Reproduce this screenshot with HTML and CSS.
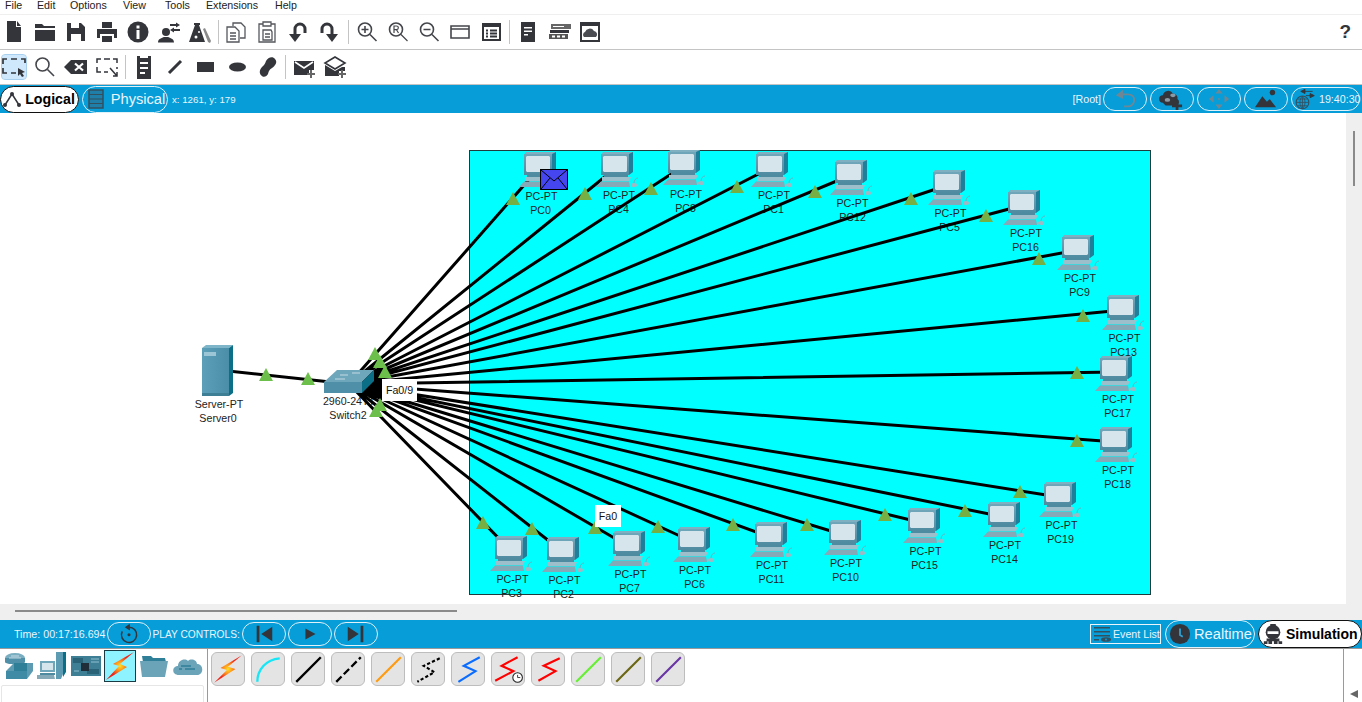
FILE: index.html
```html
<!DOCTYPE html>
<html lang="en">
<head>
<meta charset="utf-8">
<title>Cisco Packet Tracer</title>
<link rel="stylesheet" href="styles.css">
</head>
<body>
<div class="app">
  <nav class="menu">
    <span>File</span><span>Edit</span><span>Options</span><span>View</span><span>Tools</span><span>Extensions</span><span>Help</span>
  </nav>

  <div class="toolbar">
    <svg class="ic" viewBox="0 0 24 24"><path d="M5 1h9v6h5v15H5z"/><path d="M15 1l4 5h-4z"/></svg>
    <svg class="ic" viewBox="0 0 24 24"><path d="M2 4h7l2 2h11v2H2z"/><path d="M2 10h20v11H2z"/></svg>
    <svg class="ic" viewBox="0 0 24 24"><path fill-rule="evenodd" d="M3 3h14l4 4v14H3zM7 3v5h8V3zM7 14v7h10v-7z"/></svg>
    <svg class="ic" viewBox="0 0 24 24"><path d="M7 2h10v6H7zM2 9h20v9h-3v-4H5v4H2zM7 16h10v6H7z"/></svg>
    <svg class="ic" viewBox="0 0 24 24"><circle cx="12" cy="12" r="10.500"/><path class="w" d="M10.500 5.500h3v3h-3zM10.500 10h3v9h-3z"/></svg>
    <svg class="ic" viewBox="0 0 24 24"><circle cx="9" cy="12" r="4"/><path d="M1 22.500c0-4 4-4.500 6-5.500h4c2 1 6 1.500 6 5.500z"/><path d="M13 4h6V2.500L23 5l-4 2.500V6h-6zM23 11h-6v1.500L13 10l4-2.500V9h6z"/></svg>
    <svg class="ic" viewBox="0 0 24 24"><path d="M6 3h6v2h-1l6 17H1L7 5H6z"/><path d="M15 9l2-1 6 13-1 2-2-1z" fill="#8a8a8a"/><circle class="w" cx="8" cy="17" r="1.500"/><circle class="w" cx="11" cy="12" r="1"/></svg>
    <i class="sep sep-a"></i>
    <svg class="ic ln thin" viewBox="0 0 24 24"><path d="M9 6V3h8l4 4v11h-5M3 7h8l4 4v11H3zM6 13h6M6 16h6M6 19h6"/></svg>
    <svg class="ic ln thin" viewBox="0 0 24 24"><path d="M8 4H4v18h16V4h-4M8 2h8v4H8zM8 10h8l1 2v8H8zM10 14h5M10 17h5"/></svg>
    <svg class="ic" viewBox="0 0 24 24"><path d="M3 14h12l-6 8z"/><path d="M9 16V9a5 5 0 0110 0v4" fill="none" stroke="#33353b" stroke-width="3"/></svg>
    <svg class="ic" viewBox="0 0 24 24"><path d="M21 14H9l6 8z"/><path d="M15 16V9a5 5 0 00-10 0v4" fill="none" stroke="#33353b" stroke-width="3"/></svg>
    <i class="sep sep-b"></i>
    <svg class="ic ln mag" viewBox="0 0 24 24"><circle cx="10" cy="9.500" r="6.500"/><path d="M6.500 9.500h7M10 6v7M15 14.500L21.500 21"/></svg>
    <svg class="ic ln mag" viewBox="0 0 24 24"><circle cx="10" cy="9.500" r="6.500"/><path d="M15 14.500L21.500 21M8 13V6h2.500a1.800 1.800 0 010 3.700H8M10.500 9.700L12.500 13" stroke-width="1.200"/></svg>
    <svg class="ic ln mag" viewBox="0 0 24 24"><circle cx="10" cy="9.500" r="6.500"/><path d="M6.500 9.500h7M15 14.500L21.500 21"/></svg>
    <svg class="ic ln mag" viewBox="0 0 24 24"><path d="M3 6h18v12H3zM3 9h18"/></svg>
    <svg class="ic" viewBox="0 0 24 24"><path fill-rule="evenodd" d="M3 3h19v18H3zM5 7v12h15V7z"/><path d="M7 9.500h2v2H7zM11 9.500h7v2h-7zM7 12.500h2v2H7zM11 12.500h7v2h-7zM7 15.500h2v2H7zM11 15.500h7v2h-7z"/></svg>
    <i class="sep sep-c"></i>
    <svg class="ic" viewBox="0 0 24 24"><path d="M5 2h14v20H5z"/><path class="w" d="M8 7h8v1.500H8zM8 10.500h8V12H8zM8 14h4v1.500H8z"/></svg>
    <svg class="ic" viewBox="0 0 24 24"><path d="M4 4h20v5H4z" fill="#666"/><path class="w" d="M6 6h11v1H6z"/><path d="M3 10h19v3H3z"/><path d="M2 14h19v5H2z" fill="#555"/><path class="w" d="M5 15.500h3v2H5zM10 15.500h3v2h-3zM15 15.500h3v2h-3z"/></svg>
    <svg class="ic" viewBox="0 0 24 24"><path fill-rule="evenodd" d="M2 2h20v20H2zM4 6v14h16V6z"/><path d="M6 17a3 3 0 011-5 5 5 0 019-1 3.500 3.500 0 012 6z" fill="#4a4c52"/></svg>
    <b class="help">?</b>
  </div>

  <div class="toolbar">
    <span class="selected"><svg class="ic ln" viewBox="0 0 24 24"><path stroke-width="1.700" d="M1 9V4h4M9 4h6M19 4h4v4M1 13v5h4M9 18h5"/><path d="M16 13l7 4-3 1 2 3-2 1-2-3-2 2z" stroke="none" fill="#33353b"/></svg></span>
    <svg class="ic ln mag" viewBox="0 0 24 24"><circle cx="9.500" cy="9.500" r="6.500"/><path d="M14.500 14.500L21 21"/></svg>
    <svg class="ic" viewBox="0 0 24 24"><path d="M7 5h16v14H7l-7-7z"/><path d="M11 8.500l8 7M19 8.500l-8 7" stroke="#fff" stroke-width="2.200"/></svg>
    <svg class="ic ln" viewBox="0 0 24 24"><path stroke-width="1.500" d="M2 8V4h4M9 4h6M18 4h4v4M2 12v5h4M9 17h4M22 12v2M15 13l7 8M22 17v4h-4"/></svg>
    <i class="sep sep-d"></i>
    <svg class="ic" viewBox="0 0 24 24"><path d="M5 1h3v2h8V1h3v23H5z"/><path class="w" d="M8 7h8v2H8zM8 12h8v2H8zM8 17h5v2H8z"/></svg>
    <svg class="ic" viewBox="0 0 24 24"><path d="M6 18L18 6" stroke="#33353b" stroke-width="3"/></svg>
    <svg class="ic" viewBox="0 0 24 24"><path d="M3 7h17v10H3z"/></svg>
    <svg class="ic" viewBox="0 0 24 24"><ellipse cx="12.500" cy="12" rx="8.500" ry="4.500"/></svg>
    <svg class="ic" viewBox="0 0 24 24"><path d="M6 21c-3-2-3-6 0-9 2-2 3-3 4-6 2-4 7-5 9-2 3 3 0 7-3 9-3 2-3 3-4 6-1 2-4 4-6 2z"/></svg>
    <i class="sep sep-e"></i>
    <svg class="ic" viewBox="0 0 24 24"><path d="M2 6h20v9h-5v5H2z"/><path d="M3 7l9 6 9-6" fill="none" stroke="#fff" stroke-width="1.600"/><path d="M18 15h2v3h3v2h-3v3h-2v-3h-3v-2h3z" fill="#666"/></svg>
    <svg class="ic" viewBox="0 0 24 24"><path d="M12 2l10 6-10 6L2 8z" fill="none" stroke="#33353b" stroke-width="1.600"/><path d="M2 10l10 6 7-4h3v4h-6v5H2z"/><path d="M18 15h2v3h3v2h-3v3h-2v-3h-3v-2h3z" fill="#666"/></svg>
  </div>

  <div class="bluebar">
    <div class="pill pill-on logical">
      <svg class="tab-ic" viewBox="0 0 20 20"><path d="M3 16L10 5l7 11" fill="none" stroke="#33353b" stroke-width="1.500"/><circle cx="3" cy="16" r="2" fill="#33353b"/><circle cx="10" cy="5" r="2" fill="#33353b"/><circle cx="17" cy="16" r="2" fill="#33353b"/></svg>
      <b>Logical</b>
    </div>
    <div class="pill physical">
      <svg class="tab-ic2" viewBox="0 0 16 20"><path d="M1 1h14v18H1z" fill="#1f7fa8" stroke="#33505f" stroke-width="1.500"/><path d="M1 5.500h14M1 10h14M1 14.500h14" stroke="#33505f"/></svg>
      <span>Physical</span>
    </div>
    <span class="coords">x: 1261, y: 179</span>
    <div class="bar-right">
      <span class="root">[Root]</span>
      <div class="pill tool"><svg class="pill-ic" viewBox="0 0 30 24"><path d="M5 8l8-6v4h5c5 0 8 3 8 7s-3 8-8 8h-4v-2h4c3 0 6-2 6-6s-3-5-6-5h-5v4z" fill="#6f8794"/></svg></div>
      <div class="pill tool"><svg class="pill-ic" viewBox="0 0 30 24"><path d="M5 16a4 4 0 010-8 6 6 0 0111-2 5 5 0 015 6 4 4 0 01-1 7H8z" fill="#33353b"/><ellipse cx="10" cy="13" rx="3" ry="2" fill="#8a9aa5"/><ellipse cx="16" cy="8" rx="3" ry="2" fill="#8a9aa5"/><path d="M19 14h3v4h4v3h-4v3h-3v-3h-4v-3h4z" fill="#33353b"/></svg></div>
      <div class="pill tool"><svg class="pill-ic" viewBox="0 0 30 24"><path d="M15 1l4 5h-8zM15 23l-4-5h8zM4 12l5-4v8zM26 12l-5-4v8z" fill="#6f8794"/><circle cx="15" cy="12" r="1" fill="#6f8794"/></svg></div>
      <div class="pill tool"><svg class="pill-ic" viewBox="0 0 30 24"><path d="M3 21L11 9l5 6 3-3 7 9z" fill="#33353b"/><circle cx="22" cy="5" r="3" fill="#33353b"/></svg></div>
      <div class="pill tool-time">
        <svg class="time-ic" viewBox="0 0 24 26"><circle cx="9" cy="17" r="7.500" fill="none" stroke="#33505f" stroke-width="1.300"/><path d="M1.500 17h15M9 9.500v15M3 13h12M3 21h12M9 9.500c-4 4-4 11 0 15M9 9.500c4 4 4 11 0 15" fill="none" stroke="#33505f"/><path d="M11 4h10M7 4l5-2.500v5zM13 9h9M23 9l-5-2.500v5z" stroke="#33353b" fill="#33353b"/></svg>
        <span>19:40:30</span>
      </div>
    </div>
  </div>

  <main class="workspace">
    <svg class="diagram" viewBox="0 113 1346 491">
      <defs>
        <linearGradient id="mon" x1="0" y1="0" x2="0" y2="1"><stop offset="0" stop-color="#6fa6ba"/><stop offset="1" stop-color="#4e8aa0"/></linearGradient>
        <linearGradient id="srv" x1="0" y1="0" x2="1" y2="0"><stop offset="0" stop-color="#5b9fb8"/><stop offset="1" stop-color="#4a8ea8"/></linearGradient>
        <radialGradient id="bolt" cx=".5" cy=".5" r=".5"><stop offset="0" stop-color="#ffe01f"/><stop offset=".3" stop-color="#ff9a1c"/><stop offset=".75" stop-color="#ee2418"/></radialGradient>
        <g id="pc">
          <path d="M2 0h30v1l-3 2H0z" fill="#7fb0c2"/>
          <path d="M28 2l4-2v20l-4 3z" fill="#1d7f99"/>
          <path d="M0 2h28v21H0z" fill="url(#mon)"/>
          <path d="M3 4h22l1 1v14l-1 1H3l-1-1V5z" fill="#d6e4eb"/>
          <path d="M3 23h24v2H3z" fill="#4e8aa0"/>
          <path d="M1 25h29l-2 4H1z" fill="#9dbecb"/>
          <path d="M0 29.500h28l1 5.500H-5z" fill="#86a9b8"/>
          <ellipse cx="33" cy="33" rx="3" ry="2" fill="#9fb8c4"/>
          <path d="M33 31c0-3 2-5 4-5" fill="none" stroke="#7fa0ae" stroke-width=".8"/>
        </g>
        <path id="tri" d="M0-7L7 6H-7z"/>
      </defs>

      <rect class="zone" x="469.500" y="150.500" width="681" height="444"/>

      <g class="label">
        <text x="219" y="408">Server-PT</text><text x="218" y="422">Server0</text>
        <text x="349" y="405">2960-24TT</text><text x="348" y="419">Switch2</text>
        <text x="541.500" y="200">PC-PT</text><text x="540.500" y="214">PC0</text>
        <text x="619" y="199">PC-PT</text><text x="618.500" y="213">PC4</text>
        <text x="686" y="198">PC-PT</text><text x="685.500" y="212">PC8</text>
        <text x="774" y="199">PC-PT</text><text x="773.500" y="213">PC1</text>
        <text x="852.500" y="207">PC-PT</text><text x="852.500" y="221">PC12</text>
        <text x="950.500" y="217">PC-PT</text><text x="949.500" y="231">PC5</text>
        <text x="1026" y="237">PC-PT</text><text x="1025.500" y="251">PC16</text>
        <text x="1080" y="282">PC-PT</text><text x="1079.500" y="296">PC9</text>
        <text x="1124.500" y="342">PC-PT</text><text x="1123.500" y="356">PC13</text>
        <text x="1118" y="403">PC-PT</text><text x="1117.500" y="417">PC17</text>
        <text x="1118" y="474">PC-PT</text><text x="1117.500" y="488">PC18</text>
        <text x="1061.500" y="529">PC-PT</text><text x="1060.500" y="543">PC19</text>
        <text x="1005" y="549">PC-PT</text><text x="1004.500" y="563">PC14</text>
        <text x="925.500" y="555">PC-PT</text><text x="924.500" y="569">PC15</text>
        <text x="846" y="567">PC-PT</text><text x="845.500" y="581">PC10</text>
        <text x="772" y="569">PC-PT</text><text x="771.500" y="583">PC11</text>
        <text x="695" y="574">PC-PT</text><text x="694.500" y="588">PC6</text>
        <text x="630.500" y="578">PC-PT</text><text x="629.500" y="592">PC7</text>
        <text x="564.500" y="584">PC-PT</text><text x="563.500" y="598">PC2</text>
        <text x="512.500" y="583">PC-PT</text><text x="511.500" y="597">PC3</text>
      </g>

      <path class="links" d="M219 370L349 384
        M349 384L540 167M349 384L617 167M349 384L685 165M349 384L772 167M349 384L851 175
        M349 384L948 185M349 384L1024 205M349 384L1078 250M349 384L1123 310M349 384L1116 372
        M349 384L1116 442M349 384L1059 497M349 384L1004 517M349 384L923 523M349 384L844 535
        M349 384L770 537M349 384L693 542M349 384L628 546M349 384L563 552M349 384L511 551"/>

      <use href="#pc" x="524" y="152"/><use href="#pc" x="601" y="152"/><use href="#pc" x="668" y="150"/>
      <use href="#pc" x="756" y="152"/><use href="#pc" x="835" y="160"/><use href="#pc" x="933" y="170"/>
      <use href="#pc" x="1008" y="190"/><use href="#pc" x="1062" y="235"/><use href="#pc" x="1107" y="295"/>
      <use href="#pc" x="1100" y="356"/><use href="#pc" x="1100" y="427"/><use href="#pc" x="1044" y="482"/>
      <use href="#pc" x="988" y="502"/><use href="#pc" x="908" y="508"/><use href="#pc" x="829" y="520"/>
      <use href="#pc" x="755" y="522"/><use href="#pc" x="678" y="527"/><use href="#pc" x="613" y="531"/>
      <use href="#pc" x="547" y="537"/><use href="#pc" x="495" y="536"/>

      <g>
        <path d="M202 348l4-3h27l-4 3z" fill="#7fb5c8"/>
        <path d="M229 348l4-3v48l-4 3z" fill="#0b6f88"/>
        <path d="M202 348h27v48h-27z" fill="url(#srv)"/>
        <path d="M204 352h12v4h-12z" fill="#9cc6d6"/>
        <path d="M202 393h27v3h-27z" fill="#3f7f96"/>
      </g>

      <g>
        <path d="M324 382l13-12h37l-12 12z" fill="#6ea6bb"/>
        <path d="M340 375h8M352 373h8M335 379h10" stroke="#dbe9ef" stroke-width=".8"/>
        <path d="M324 382h38v11h-38z" fill="#4f8fa8"/>
        <path d="M362 382l12-12v11l-12 12z" fill="#0b6f88"/>
      </g>

      <g class="tri-a">
        <use href="#tri" x="266" y="375"/><use href="#tri" x="308" y="379"/>
        <use href="#tri" x="375" y="354"/><use href="#tri" x="380" y="362"/><use href="#tri" x="385" y="372"/>
        <use href="#tri" x="380" y="405"/><use href="#tri" x="376" y="411"/>
      </g>
      <g class="tri-b">
        <use href="#tri" x="513" y="199"/><use href="#tri" x="585" y="194"/><use href="#tri" x="651" y="189"/>
        <use href="#tri" x="737" y="187"/><use href="#tri" x="815" y="192"/><use href="#tri" x="911" y="199"/>
        <use href="#tri" x="986" y="216"/><use href="#tri" x="1039" y="259"/><use href="#tri" x="1083" y="316"/>
        <use href="#tri" x="1077" y="373"/><use href="#tri" x="1077" y="441"/><use href="#tri" x="1020" y="492"/>
        <use href="#tri" x="965" y="511"/><use href="#tri" x="885" y="515"/><use href="#tri" x="807" y="525"/>
        <use href="#tri" x="733" y="525"/><use href="#tri" x="658" y="527"/><use href="#tri" x="595" y="528"/>
        <use href="#tri" x="532" y="529"/><use href="#tri" x="483" y="523"/>
      </g>

      <g class="tag">
        <rect x="382" y="379" width="35" height="22"/><text x="399.500" y="394">Fa0/9</text>
        <rect x="595" y="505" width="26" height="22"/><text x="608" y="520">Fa0</text>
      </g>

      <g>
        <rect x="540.500" y="169.500" width="27" height="20" fill="#4646f0" stroke="#000"/>
        <path d="M541 170l13 11 13-11M541 189l9-11M567 189l-9-11" fill="none" stroke="#000"/>
      </g>
    </svg>
    <div class="vscroll"><i></i></div>
  </main>
  <div class="hscroll"><i></i></div>

  <div class="bluebar bluebar-low">
    <span class="time">Time: 00:17:16.694</span>
    <div class="pill tool">
      <svg class="pill-ic" viewBox="0 0 30 26"><path d="M15 5a9 9 0 11-8 5" fill="none" stroke="#33353b" stroke-width="1.800"/><path d="M16 1v8l-6-4z" fill="#33353b"/><circle cx="15" cy="14" r="1.800" fill="#33353b"/></svg>
    </div>
    <span class="play">PLAY CONTROLS:</span>
    <div class="pill tool"><svg class="pill-ic" viewBox="0 0 30 24"><path d="M7 3h3v18H7zM24 4v16L12 12z" fill="#33353b"/></svg></div>
    <div class="pill tool"><svg class="pill-ic" viewBox="0 0 30 24"><path d="M10 6l11 6-11 6z" fill="#33353b"/></svg></div>
    <div class="pill tool"><svg class="pill-ic" viewBox="0 0 30 24"><path d="M20 3h3v18h-3zM6 4v16l12-8z" fill="#33353b"/></svg></div>
    <div class="bar-right">
      <div class="event">
        <svg class="event-ic" viewBox="0 0 18 16"><path d="M0 1h16v1.500H0zM0 5h16v1.500H0zM0 9h16v1.500H0zM0 13h5v1.500H0z" fill="#33505f"/><ellipse cx="12" cy="13.500" rx="5" ry="2.300" fill="#33505f"/><circle cx="12" cy="13.500" r="1" fill="#069dd8"/></svg>
        <span>Event List</span>
      </div>
      <div class="pill realtime">
        <svg class="rt-ic" viewBox="0 0 24 24"><circle cx="12" cy="12" r="11" fill="#33353b"/><path d="M12 6v7l3 2" fill="none" stroke="#2f9fd0" stroke-width="2"/></svg>
        <span>Realtime</span>
      </div>
      <div class="pill pill-on simulation">
        <svg class="rt-ic" viewBox="0 0 24 24"><circle cx="12" cy="10" r="8" fill="#33353b"/><path d="M6 9h12v3H6z" fill="#fff"/><path d="M9 1h6v3H9zM2 20h4v3H2zM7 20h4v3H7zM13 20h4v3h-4zM18 20h4v3h-4zM5 17h14v3H5z" fill="#33353b"/></svg>
        <b>Simulation</b>
      </div>
    </div>
  </div>

  <div class="bottom">
    <div class="palette">
      <div class="cats">
        <svg class="cat" viewBox="0 0 30 30"><ellipse cx="12" cy="7" rx="10" ry="5" fill="#79adc0"/><path d="M2 7v4c0 3 20 3 20 0V7" fill="#4f8fa8"/><path d="M6 7h12M8 5h8" stroke="#dbe9ef" stroke-width=".8"/><path d="M3 20l8-8h19v8l-6 8H3z" fill="#5d9bb2"/><path d="M3 20h21v8H3z" fill="#3f8aa4"/><path d="M11 12h13v8H11z" fill="#2f7f99"/></svg>
        <svg class="cat" viewBox="0 0 30 30"><path d="M19 1h7v22l-2 5h-5z" fill="#5d9bb2"/><path d="M26 1h3v20l-3 5z" fill="#0b6f88"/><path d="M3 10h15v11H3z" fill="#6fa6ba"/><path d="M5 12h11v7H5z" fill="#d6e4eb"/><path d="M3 22h15v2H3z" fill="#4e8aa0"/><path d="M0 24h17l1 4H0z" fill="#86a9b8"/></svg>
        <svg class="cat" viewBox="0 0 30 30"><path d="M0 5h30v20H0z" fill="#3f7f96"/><path d="M2 7h10v5H2zM16 18h12v5H16z" fill="#2a6278"/><path d="M10 12h8v8h-8z" fill="#1f2e38"/><path d="M20 8h8M20 11h8M3 20h5" stroke="#8fc0d0"/></svg>
        <span class="cat-on"><svg class="cat" viewBox="0 0 30 30"><path d="M29 1L8 13l6 2L1 29l21-13-7-3z" fill="url(#bolt)"/></svg></span>
        <svg class="cat" viewBox="0 0 30 30"><path d="M3 5h9l2 2h12l1 4H4z" fill="#2f7f99"/><path d="M1 10h28l-3 16H3z" fill="#6ba3b8"/></svg>
        <svg class="cat" viewBox="0 0 30 30"><path d="M6 24c-8 0-7-9-1-9 0-6 7-8 10-5 3-3 9-1 9 3 7 0 7 11 0 11z" fill="#6ba3b8"/><path d="M8 15h10M12 18h10M6 18h3" stroke="#2f7f99" stroke-width="1.500"/></svg>
      </div>
      <div class="subbox"></div>
    </div>

    <div class="conns">
      <span class="conn"><svg viewBox="0 0 30 30"><path d="M28 2L8 14l6 2L2 28l20-13-7-2z" fill="url(#bolt)"/></svg></span>
      <span class="conn"><svg viewBox="0 0 30 30"><path d="M5 27c0-11 8-21 21-22" fill="none" stroke="#16e6f5" stroke-width="2.200"/></svg></span>
      <span class="conn"><svg viewBox="0 0 30 30"><path d="M4 27L27 4" stroke="#000" stroke-width="2.200"/></svg></span>
      <span class="conn"><svg viewBox="0 0 30 30"><path d="M4 27L27 4" stroke="#000" stroke-width="2.200" stroke-dasharray="7 3"/></svg></span>
      <span class="conn"><svg viewBox="0 0 30 30"><path d="M4 27L27 4" stroke="#ff9a10" stroke-width="2"/></svg></span>
      <span class="conn"><svg viewBox="0 0 30 30"><path d="M26 5L11 12l10 6L5 27" fill="none" stroke="#000" stroke-width="2" stroke-dasharray="3 2"/></svg></span>
      <span class="conn"><svg viewBox="0 0 30 30"><path d="M26 4L11 12l11 5L6 27" fill="none" stroke="#0a6cff" stroke-width="2"/></svg></span>
      <span class="conn"><svg viewBox="0 0 30 30"><path d="M24 4L9 12l11 5L3 26" fill="none" stroke="#f00" stroke-width="2"/><circle cx="24" cy="23" r="4.500" fill="#fff" stroke="#222" stroke-width="1"/><path d="M24 20.500V23h2.500" fill="none" stroke="#222" stroke-width=".8"/></svg></span>
      <span class="conn"><svg viewBox="0 0 30 30"><path d="M26 5L11 12l11 5L6 26" fill="none" stroke="#f00" stroke-width="2"/></svg></span>
      <span class="conn"><svg viewBox="0 0 30 30"><path d="M4 27L27 4" stroke="#66ee33" stroke-width="2"/></svg></span>
      <span class="conn"><svg viewBox="0 0 30 30"><path d="M4 27L27 4" stroke="#6b6611" stroke-width="2"/></svg></span>
      <span class="conn"><svg viewBox="0 0 30 30"><path d="M4 27L27 4" stroke="#6a35a5" stroke-width="2"/></svg></span>
    </div>

    <div class="side">
      <svg class="arrow" viewBox="0 0 10 10"><path d="M9 1v8L1 5z"/></svg>
    </div>
  </div>
</div>
</body>
</html>
```

FILE: styles.css
```css
* { box-sizing: border-box; }
html, body { margin: 0; padding: 0; }
body { background: #fff; overflow: hidden; font-family: "Liberation Sans", Arial, sans-serif; font-size: 10.67px; color: #222; }

.app { width: 1362px; height: 702px; display: flex; flex-direction: column; overflow: hidden; }

.menu { height: 15px; flex: none; display: grid; grid-template-columns: 32px 33px 53px 42px 41px 69px auto; padding-left: 5px; line-height: 11px; border-bottom: 1px solid #efefef; }

.toolbar { height: 35px; flex: none; display: flex; align-items: center; gap: 7px; padding-left: 2px; border-bottom: 1px solid #c4c4c4; }
.ic { width: 24px; height: 24px; flex: none; fill: #33353b; }
.ic .w { fill: #fff; }
.ln { fill: none; stroke: #33353b; stroke-width: 1.800; }
.thin { stroke: #55575c; stroke-width: 1.300; }
.mag { stroke: #44464b; stroke-width: 1.600; }
.sep { width: 1px; height: 24px; flex: none; background: #c4c4c4; }
.sep-a { margin: 0 -2px 0 -1px; }
.sep-b { margin: 0 -1px 0 0; }
.sep-c { margin: 0 -1px 0 -1px; }
.sep-d { margin: 0 -1px 0 -1px; }
.sep-e { margin: 0 -1px 0 -2px; }
.help { margin-left: auto; margin-right: 11px; font-size: 19px; color: #33353b; }
.selected { width: 24px; height: 24px; flex: none; display: flex; background: #cfe8fb; border-radius: 3px; outline: 1px solid #a8d0ee; }

.bluebar { height: 28px; flex: none; display: flex; align-items: center; background: #069dd8; color: #e9f5fb; }
.bluebar-low { height: 29px; padding-left: 14px; border-bottom: 1px solid #9a9a9a; }
.pill { display: flex; align-items: center; justify-content: center; flex: none; border: 1px solid #dff1f9; border-radius: 14px; }
.pill-on { background: #fff; border-color: #111; color: #000; }
.logical { width: 79px; height: 27px; gap: 3px; font-size: 14.2px; padding-right: 2px; }
.physical { width: 86px; height: 27px; margin-left: 3px; gap: 7px; font-size: 14.67px; padding-left: 3px; }
.tab-ic { width: 20px; height: 20px; }
.tab-ic2 { width: 16px; height: 20px; }
.coords { margin-left: 4px; font-size: 9.7px; }
.bar-right { margin-left: auto; display: flex; align-items: center; gap: 3px; }
.root { margin-right: -1px; }
.tool { width: 44px; height: 24px; }
.pill-ic { width: 30px; height: 22px; }
.tool-time { width: 69px; height: 24px; margin-right: 2px; justify-content: flex-start; gap: 2px; padding-left: 1px; }
.time-ic { width: 24px; height: 22px; flex: none; }
.time { margin-right: 2px; }
.play { width: 90px; flex: none; margin-left: -1px; font-size: 10.2px; white-space: nowrap; }
.bluebar-low .tool { margin-right: 2px; }
.bluebar-low .bar-right { gap: 3px; }
.event { width: 71px; height: 20px; display: flex; align-items: center; gap: 1px; padding-left: 3px; border: 1px solid #e9f5fb; margin-right: 1px; white-space: nowrap; }
.event-ic { width: 18px; height: 16px; flex: none; }
.realtime { width: 90px; height: 28px; gap: 3px; font-size: 14.67px; justify-content: flex-start; padding-left: 3px; }
.rt-ic { width: 22px; height: 22px; flex: none; }
.simulation { width: 104px; height: 28px; gap: 2px; font-size: 14px; justify-content: flex-start; padding-left: 3px; white-space: nowrap; }

.workspace { height: 491px; flex: none; display: flex; }
.diagram { width: 1346px; height: 491px; flex: none; display: block; background: #fff; }
.zone { fill: #00ffff; stroke: #1f3b3b; stroke-width: 1; }
.label text { font-size: 10.67px; text-anchor: middle; fill: #222; }
.links { fill: none; stroke: #000; stroke-width: 3; }
.tri-a { fill: #6cbf4b; }
.tri-b { fill: #76b045; }
.tag rect { fill: #fff; }
.tag text { font-size: 10.67px; text-anchor: middle; fill: #111; }
.vscroll { width: 16px; flex: none; background: #efefef; padding: 18px 0 0 7px; }
.vscroll i { display: block; width: 2px; height: 55px; background: #8a8a8a; }
.hscroll { height: 16px; flex: none; background: #efefef; padding: 6px 0 0 15px; }
.hscroll i { display: block; width: 442px; height: 2px; background: #8a8a8a; }

.bottom { flex: 1; display: flex; min-height: 0; }
.palette { width: 208px; flex: none; border-right: 1px solid #9a9a9a; padding: 2px 0 0 1px; overflow: hidden; }
.cats { display: flex; align-items: center; height: 30px; gap: 4px; padding-left: 2px; }
.cat { width: 30px; height: 30px; flex: none; display: block; }
.cat-on { display: block; width: 30px; height: 30px; background: #8ff3ff; outline: 1px solid #1b3b44; }
.subbox { margin-top: 4px; width: 203px; height: 30px; border: 1px solid #e6e6e6; border-radius: 2px; }
.conns { display: flex; gap: 6px; padding: 3px 0 0 3px; flex: 1; align-items: flex-start; }
.conn { width: 34px; height: 34px; flex: none; background: #e4e4e4; border: 1px solid #bdbdbd; border-radius: 6px; display: block; }
.conn svg { display: block; width: 32px; height: 32px; }
.side { width: 19px; flex: none; border-left: 1px solid #9a9a9a; display: flex; align-items: flex-end; justify-content: flex-end; padding: 0 3px 3px 0; }
.arrow { width: 10px; height: 10px; fill: #666; }
```
